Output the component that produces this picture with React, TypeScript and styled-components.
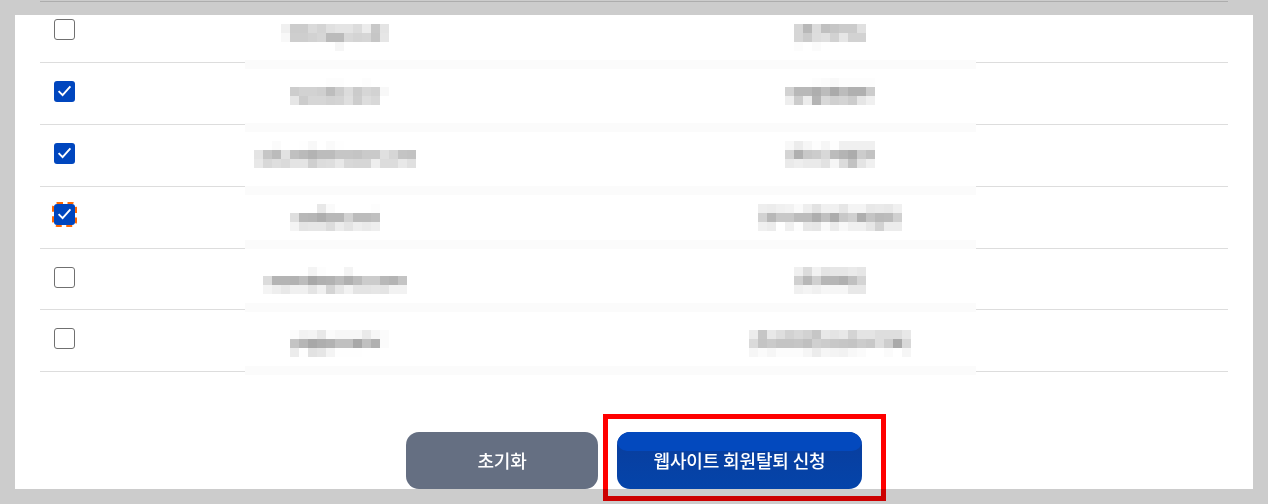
import React from 'react';
import styled, { createGlobalStyle } from 'styled-components';

const GlobalStyle = createGlobalStyle`
  html, body {
    margin: 0;
    padding: 0;
    background: #cccccc;
    font-family: "Noto Sans CJK KR", "Noto Sans", sans-serif;
  }
`;

const BLOCK = 9;

interface RowData {
  height: number;
  boxTop: number;
  checked?: boolean;
  focused?: boolean;
  cellTop: number;
  bandTop: number;
  name: string[];
  contact: string[];
}

const rows: RowData[] = [
  {
    height: 48,
    boxTop: 4,
    cellTop: 9,
    bandTop: 45,
    name: [
      'f0 cc cc da d4 e0 e4 e4 dc ec c8 e4',
      'f8 ce ce d2 d6 bb bb d8 d4 d6 c6 e6',
      'ff ff ff ff ff ff f6 ff ff ff ff ff',
    ],
    contact: [
      'd6 b8 dc c0 c6 cb cb e0',
      'd6 cb dd e0 d2 e6 d2 d2',
      'fc ff fb ff ff ff ff ff',
    ],
  },
  {
    height: 62,
    boxTop: 18,
    checked: true,
    cellTop: 15,
    bandTop: 60,
    name: [
      'ff ff ff ff ff fd fd ff ff fd ff ff',
      'ff cd d2 d2 cf bd cd dc cb d6 d2 f8',
      'ff e6 cc d6 d6 d2 d4 df cd dd d8 ff',
    ],
    contact: [
      'ff ff ff fd fb f9 fd fd fd fd',
      'd2 b8 b8 ae bc aa bc b0 b0 cc',
      'ee cc ec b4 d8 d0 d4 cc e6 f0',
    ],
  },
  {
    height: 62,
    boxTop: 18,
    checked: true,
    cellTop: 16,
    bandTop: 61,
    name: [
      'ff ff fb ff ff fe f8 ff fa fe ff ff ff ff ff ff ff ff',
      'e4 c6 bb e2 c0 ba b3 bc bc c6 c6 c4 ca ca e0 d6 c4 c2',
      'e8 d8 de da e4 e4 cf dc de e8 d8 d6 d6 ee dc dc e8 e0',
    ],
    contact: [
      'f8 ec f6 fd f6 fe f0 f0 f0 f0',
      'd4 b0 c8 cc d8 bc b4 ac cc c2',
      'ea ee ea ea e2 f6 dc c2 e4 f0',
    ],
  },
  {
    height: 62,
    boxTop: 17,
    checked: true,
    focused: true,
    cellTop: 17,
    bandTop: 53,
    name: [
      'ff ff ff ff e8 fa ff ff ff ff fd ff',
      'ff df b8 b6 ae b8 b8 d2 bc bc c0 ff',
      'ff f4 e4 e6 e6 dc ec e4 ee ea ee ff',
    ],
    contact: [
      'ee ec f0 f2 fa ee e2 f0 f0 e6 f4 f4 e8 ea e8 f0',
      'd2 b8 c8 c8 bc bc ae c0 ac c8 d0 ae c4 ba bc d0',
      'f0 ec ff f0 fd e8 e6 fa ec f8 f0 f0 e6 d2 ec ec',
    ],
  },
  {
    height: 61,
    boxTop: 18,
    cellTop: 18,
    bandTop: 54,
    name: [
      'ff ff ff ff ff f4 fd ff ff f4 ff ff ff ff ff ff',
      'dc b4 b4 b2 bc a8 b0 b2 bc b0 bc cc cc b8 b4 c4',
      'f4 ee e8 f0 f0 e4 f0 d4 e6 f2 e4 e4 e6 e4 f2 f2',
    ],
    contact: [
      'f0 dc f2 e4 e6 e6 ea e6',
      'd0 b8 d0 b6 b6 b0 c0 d4',
      'f0 f4 f0 f6 f6 f6 e8 e8',
    ],
  },
  {
    height: 62,
    boxTop: 18,
    cellTop: 20,
    bandTop: 56,
    name: [
      'ff fc f2 f4 e8 fb f7 f7 f7 ea f7 fb',
      'ff c4 b6 a8 ae b2 c0 c0 a8 c0 b0 fb',
      'ff ec fe e2 e6 f4 fe fe fe ff ff ff',
    ],
    contact: [
      'ec c6 e8 de d2 d8 d2 c6 e8 e4 e8 d4 e4 e4 de de de e8',
      'da c4 ca c4 c4 c6 c0 d0 cc c8 c6 c4 cc c8 de ce aa d8',
      'f6 fb f6 fc fc fc f6 ec f6 f4 f2 f8 fb ff ff fb ff f6',
    ],
  },
];

const Page = styled.div`
  height: 504px;
  padding-top: 1px;
  box-sizing: border-box;
  overflow: hidden;
  background: #cccccc;
`;

const TopRule = styled.div`
  height: 1px;
  margin: 0 40px;
  background: #adadad;
`;

const Panel = styled.main`
  height: 474px;
  margin: 13px 15px 0;
  padding: 0 25px;
  box-sizing: border-box;
  background: #ffffff;
`;

const Row = styled.div<{ $height: number }>`
  position: relative;
  display: grid;
  grid-template-columns: 165px 260px 730px 1fr;
  height: ${(p) => p.$height}px;
  box-sizing: border-box;
  border-bottom: 1px solid #dddddd;
`;

const CheckCell = styled.div<{ $top: number }>`
  padding: ${(p) => p.$top}px 0 0 14px;
`;

const Box = styled.div<{ $checked?: boolean; $focused?: boolean }>`
  width: 21px;
  height: 21px;
  box-sizing: border-box;
  border-radius: 3px;
  border: ${(p) => (p.$checked ? 'none' : '1.5px solid #707070')};
  background: ${(p) => (p.$checked ? '#0046be' : '#ffffff')};
  outline: ${(p) => (p.$focused ? '2px dashed #ff6600' : 'none')};

  svg {
    display: block;
  }
`;

const MaskedCell = styled.div<{ $top: number }>`
  display: flex;
  justify-content: center;
  align-items: flex-start;
  padding-top: ${(p) => p.$top}px;
`;

const Band = styled.div<{ $top: number }>`
  position: absolute;
  left: 205px;
  top: ${(p) => p.$top}px;
  width: 731px;
  height: 9px;
  background: #fbfbfb;
`;

const ButtonBar = styled.div`
  display: flex;
  justify-content: center;
  gap: 19px;
  margin-top: 60px;
`;

const ResetButton = styled.button`
  width: 192px;
  height: 57px;
  padding: 0 0 2px;
  border: none;
  border-radius: 13px;
  background: #656f82;
  color: #ffffff;
  font: 500 18px "Noto Sans CJK KR", sans-serif;
  letter-spacing: -0.15px;
`;

const SubmitWrap = styled.div`
  position: relative;
`;

const SubmitButton = styled.button`
  position: relative;
  display: block;
  width: 245px;
  height: 57px;
  padding: 0 0 2px;
  border: none;
  border-radius: 13px;
  overflow: hidden;
  background: linear-gradient(180deg, #0a3d9c 0%, #0444aa 100%);
  color: #ffffff;
  font: 500 18px "Noto Sans CJK KR", sans-serif;
  letter-spacing: -0.15px;

  &::before {
    content: '';
    position: absolute;
    top: 0;
    left: 0;
    right: 0;
    height: 19px;
    border-radius: 0 0 10px 10px;
    background: #0349be;
  }

  span {
    position: relative;
  }
`;

const Callout = styled.div`
  position: absolute;
  inset: -18px -24px -12px -14px;
  border: 5px solid #ff0000;
  mix-blend-mode: multiply;
  pointer-events: none;
`;

function Mosaic({ data }: { data: string[] }) {
  const grid = data.map((line) => line.split(' '));
  const width = grid[0].length * BLOCK;
  return (
    <svg width={width} height={grid.length * BLOCK} shapeRendering="crispEdges" style={{ display: 'block' }}>
      {grid.map((line, y) =>
        line.map((g, x) => (
          <rect key={x} x={x * BLOCK} y={y * BLOCK} width={BLOCK} height={BLOCK} fill={`#${g}${g}${g}`} />
        )),
      )}
    </svg>
  );
}

export default function App() {
  return (
    <Page>
      <GlobalStyle />
      <TopRule />
      <Panel>
        {rows.map((row, i) => (
          <Row key={i} $height={row.height}>
            <CheckCell $top={row.boxTop}>
              <Box $checked={row.checked} $focused={row.focused}>
                {row.checked && (
                  <svg width="21" height="21" viewBox="0 0 21 21" fill="none">
                    <path d="M4.6 10.2 8.6 14.2 16.4 5.4" stroke="#fff" strokeWidth="1.9" />
                  </svg>
                )}
              </Box>
            </CheckCell>
            <MaskedCell $top={row.cellTop}>
              <Mosaic data={row.name} />
            </MaskedCell>
            <MaskedCell $top={row.cellTop}>
              <Mosaic data={row.contact} />
            </MaskedCell>
            <Band $top={row.bandTop} />
          </Row>
        ))}
        <ButtonBar>
          <ResetButton>초기화</ResetButton>
          <SubmitWrap>
            <SubmitButton>
              <span>웹사이트 회원탈퇴 신청</span>
            </SubmitButton>
            <Callout />
          </SubmitWrap>
        </ButtonBar>
      </Panel>
    </Page>
  );
}
